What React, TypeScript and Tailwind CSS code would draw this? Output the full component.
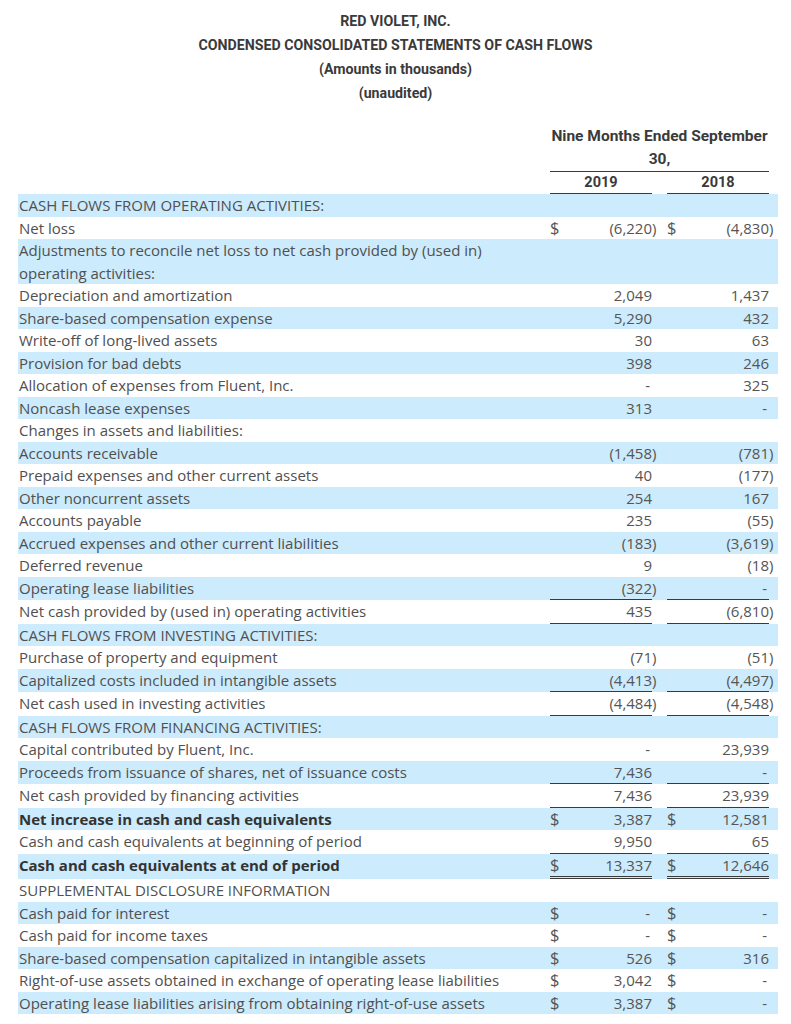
import React from 'react';

type Row = {
  label: React.ReactNode;
  a?: string;
  b?: string;
  dollar?: 'both' | 'a';
  bold?: boolean;
  rule?: 'single' | 'double';
};

const rows: Row[] = [
  { label: 'CASH FLOWS FROM OPERATING ACTIVITIES:' },
  { label: 'Net loss', a: '(6,220)', b: '(4,830)', dollar: 'both' },
  {
    label: (
      <>
        Adjustments to reconcile net loss to net cash provided by (used in)
        <br />
        operating activities:
      </>
    ),
  },
  { label: 'Depreciation and amortization', a: '2,049', b: '1,437' },
  { label: 'Share-based compensation expense', a: '5,290', b: '432' },
  { label: 'Write-off of long-lived assets', a: '30', b: '63' },
  { label: 'Provision for bad debts', a: '398', b: '246' },
  { label: 'Allocation of expenses from Fluent, Inc.', a: '-', b: '325' },
  { label: 'Noncash lease expenses', a: '313', b: '-' },
  { label: 'Changes in assets and liabilities:' },
  { label: 'Accounts receivable', a: '(1,458)', b: '(781)' },
  { label: 'Prepaid expenses and other current assets', a: '40', b: '(177)' },
  { label: 'Other noncurrent assets', a: '254', b: '167' },
  { label: 'Accounts payable', a: '235', b: '(55)' },
  { label: 'Accrued expenses and other current liabilities', a: '(183)', b: '(3,619)' },
  { label: 'Deferred revenue', a: '9', b: '(18)' },
  { label: 'Operating lease liabilities', a: '(322)', b: '-', rule: 'single' },
  { label: 'Net cash provided by (used in) operating activities', a: '435', b: '(6,810)', rule: 'single' },
  { label: 'CASH FLOWS FROM INVESTING ACTIVITIES:' },
  { label: 'Purchase of property and equipment', a: '(71)', b: '(51)' },
  { label: 'Capitalized costs included in intangible assets', a: '(4,413)', b: '(4,497)', rule: 'single' },
  { label: 'Net cash used in investing activities', a: '(4,484)', b: '(4,548)', rule: 'single' },
  { label: 'CASH FLOWS FROM FINANCING ACTIVITIES:' },
  { label: 'Capital contributed by Fluent, Inc.', a: '-', b: '23,939' },
  { label: 'Proceeds from issuance of shares, net of issuance costs', a: '7,436', b: '-', rule: 'single' },
  { label: 'Net cash provided by financing activities', a: '7,436', b: '23,939', rule: 'single' },
  { label: 'Net increase in cash and cash equivalents', a: '3,387', b: '12,581', dollar: 'both', bold: true },
  { label: 'Cash and cash equivalents at beginning of period', a: '9,950', b: '65', rule: 'single' },
  { label: 'Cash and cash equivalents at end of period', a: '13,337', b: '12,646', dollar: 'both', bold: true, rule: 'double' },
  { label: 'SUPPLEMENTAL DISCLOSURE INFORMATION' },
  { label: 'Cash paid for interest', a: '-', b: '-', dollar: 'both' },
  { label: 'Cash paid for income taxes', a: '-', b: '-', dollar: 'both' },
  { label: 'Share-based compensation capitalized in intangible assets', a: '526', b: '316', dollar: 'both' },
  { label: 'Right-of-use assets obtained in exchange of operating lease liabilities', a: '3,042', b: '-', dollar: 'both' },
  { label: 'Operating lease liabilities arising from obtaining right-of-use assets', a: '3,387', b: '-', dollar: 'both' },
];

function Amount({ value, dollar, rule, tail }: { value?: string; dollar: boolean; rule?: Row['rule']; tail: string }) {
  const neg = value?.endsWith(')');
  const text = neg ? value!.slice(0, -1) : value;
  const ruleCls =
    rule === 'double'
      ? 'border-b-[3px] border-double border-[#3a3a3a]'
      : rule === 'single'
        ? 'border-b border-[#3a3a3a]'
        : '';
  return (
    <>
      <div className={`w-[102px] shrink-0 flex justify-between items-start ${ruleCls}`}>
        <span className="text-[16.5px] leading-[22.5px]">{dollar ? '$' : ''}</span>
        <span className={text === '-' ? 'pr-[2px]' : ''}>{text}</span>
      </div>
      <div className={`${tail} shrink-0`}>{neg ? ')' : ''}</div>
    </>
  );
}

export default function App() {
  return (
    <div className="w-[791px] bg-white text-[#505050]" style={{ fontFamily: '"Open Sans", "Noto Sans", sans-serif' }}>
      <div
        className="pt-[9px] text-center text-[14.2px] font-bold leading-[24px] text-[#3a3a3a]"
        style={{ fontFamily: 'Roboto, "Liberation Sans", sans-serif' }}
      >
        <div>RED VIOLET, INC.</div>
        <div>CONDENSED CONSOLIDATED STATEMENTS OF CASH FLOWS</div>
        <div>(Amounts in thousands)</div>
        <div>(unaudited)</div>
      </div>

      <div
        className="ml-[550px] mt-[20px] w-[219px] text-[15.5px] font-bold text-[#3a3a3a]"
        style={{ fontFamily: 'Roboto, "Liberation Sans", sans-serif' }}
      >
        <div className="border-b border-[#3a3a3a] text-center leading-[23px]">
          Nine Months Ended September
          <br />
          30,
        </div>
        <div className="flex text-[14.5px] leading-[21px]">
          <div className="w-[102px] border-b border-[#3a3a3a] text-center">2019</div>
          <div className="w-[15px]" />
          <div className="w-[102px] border-b border-[#3a3a3a] text-center">2018</div>
        </div>
      </div>

      <div className="ml-[18px] w-[760px] text-[15px] leading-[22.5px]">
        {rows.map((r, i) => (
          <div key={i} className={`flex ${i % 2 === 0 ? 'bg-[#ccebfc]' : ''}`}>
            <div className={`flex-1 pl-px ${r.bold ? 'font-bold text-[#333]' : ''}`}>{r.label}</div>
            <div className="flex w-[228px] shrink-0 text-[#555]">
              <Amount value={r.a} dollar={!!r.dollar} rule={r.rule} tail="w-[15px]" />
              <Amount value={r.b} dollar={r.dollar === 'both'} rule={r.rule} tail="w-[9px]" />
            </div>
          </div>
        ))}
      </div>
    </div>
  );
}
